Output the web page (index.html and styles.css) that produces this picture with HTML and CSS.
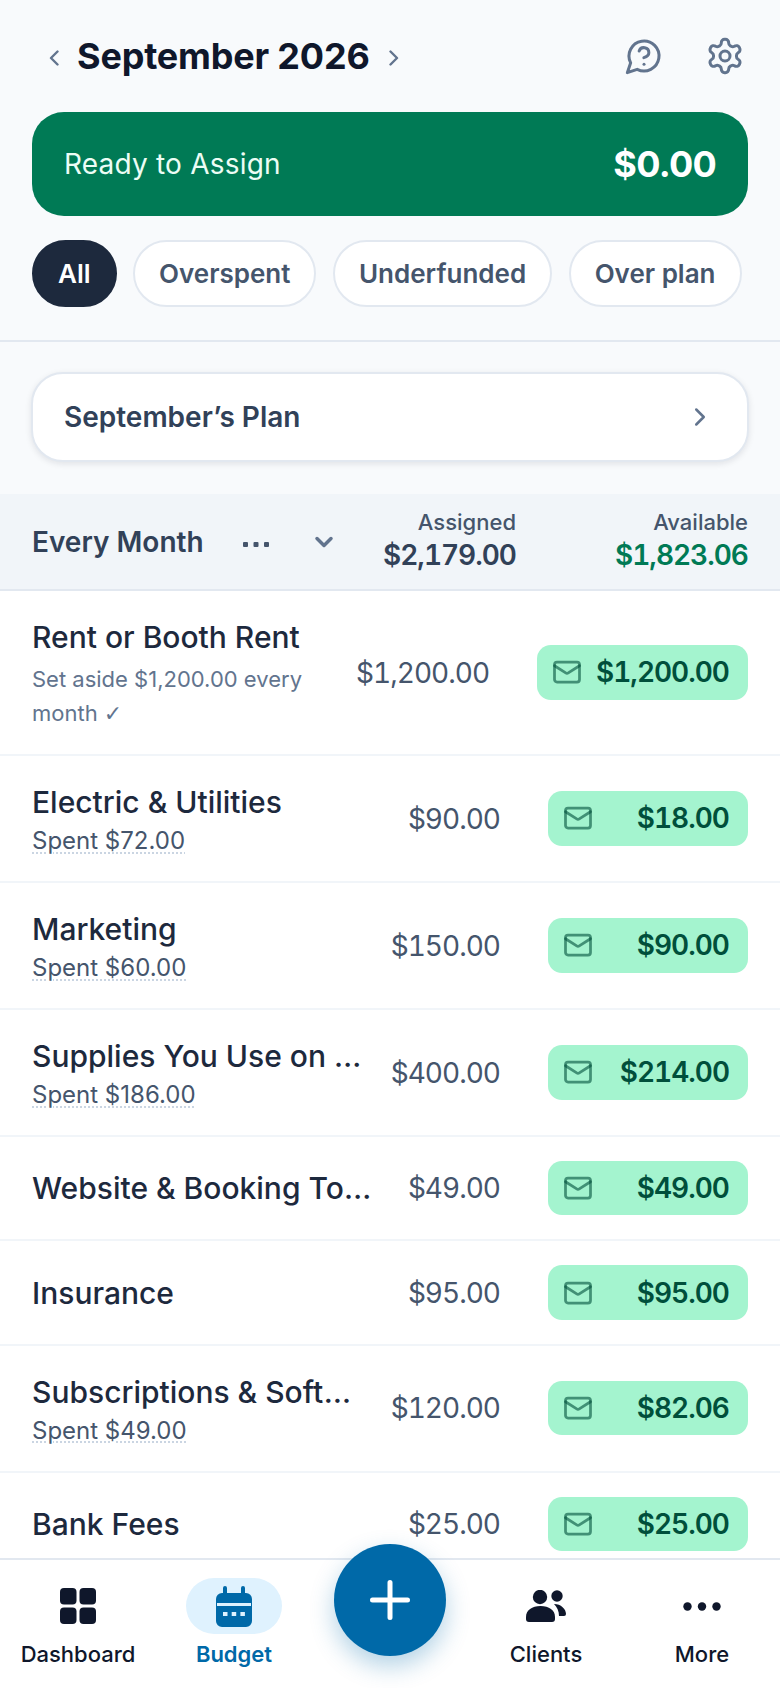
FILE: index.html
```html
<!DOCTYPE html>
<html lang="en">
<head>
  <meta charset="UTF-8">
  <title>Budget</title>
  <link rel="stylesheet" href="styles.css">
</head>
<body>
  <div class="app">
    <div class="top">
      <div class="month-bar">
        <svg class="month-arrow" viewBox="0 0 10 16"><path d="M8.5 1.5 2 8l6.5 6.5"/></svg>
        <h1 class="month-title">September 2026</h1>
        <svg class="month-arrow" viewBox="0 0 10 16"><path d="M1.5 1.5 8 8l-6.5 6.5"/></svg>
        <div class="top-icons">
          <svg class="top-icon" viewBox="0 0 24 24"><path d="M7.9 20A9 9 0 1 0 4 16.1L2 22Z"/><path d="M9.09 9a3 3 0 0 1 5.83 1c0 2-3 3-3 3"/><path d="M12 17h.01"/></svg>
          <svg class="top-icon" viewBox="0 0 24 24"><path d="M12.22 2h-.44a2 2 0 0 0-2 2v.18a2 2 0 0 1-1 1.73l-.43.25a2 2 0 0 1-2 0l-.15-.08a2 2 0 0 0-2.73.73l-.22.38a2 2 0 0 0 .73 2.73l.15.1a2 2 0 0 1 1 1.72v.51a2 2 0 0 1-1 1.74l-.15.09a2 2 0 0 0-.73 2.73l.22.38a2 2 0 0 0 2.73.73l.15-.08a2 2 0 0 1 2 0l.43.25a2 2 0 0 1 1 1.73V20a2 2 0 0 0 2 2h.44a2 2 0 0 0 2-2v-.18a2 2 0 0 1 1-1.73l.43-.25a2 2 0 0 1 2 0l.15.08a2 2 0 0 0 2.73-.73l.22-.39a2 2 0 0 0-.73-2.73l-.15-.08a2 2 0 0 1-1-1.74v-.5a2 2 0 0 1 1-1.74l.15-.09a2 2 0 0 0 .73-2.73l-.22-.38a2 2 0 0 0-2.73-.73l-.15.08a2 2 0 0 1-2 0l-.43-.25a2 2 0 0 1-1-1.73V4a2 2 0 0 0-2-2z"/><circle cx="12" cy="12" r="3"/></svg>
        </div>
      </div>
      <div class="ready-card">
        <span class="ready-label">Ready to Assign</span>
        <span class="ready-amount">$0.00</span>
      </div>
      <div class="filters">
        <span class="filter filter-on">All</span>
        <span class="filter">Overspent</span>
        <span class="filter">Underfunded</span>
        <span class="filter">Over plan</span>
      </div>
    </div>

    <div class="plan-wrap">
      <div class="plan-card">
        <span>September’s Plan</span>
        <svg class="plan-chevron" viewBox="0 0 24 24"><path d="m9 18 6-6-6-6"/></svg>
      </div>
    </div>

    <div class="group-head">
      <div class="group-name">
        <span>Every Month</span>
        <svg class="group-dots" viewBox="0 0 26 5"><rect width="5" height="5" rx="1"/><rect x="10.5" width="5" height="5" rx="1"/><rect x="21" width="5" height="5" rx="1"/></svg>
        <svg class="group-chevron" viewBox="0 0 24 24"><path d="m6 9 6 6 6-6"/></svg>
      </div>
      <div class="group-col">
        <span class="col-label">Assigned</span>
        <span class="col-value">$2,179.00</span>
      </div>
      <div class="group-col group-col-avail">
        <span class="col-label">Available</span>
        <span class="col-value col-green">$1,823.06</span>
      </div>
    </div>

    <div class="rows">
      <div class="row">
        <div class="row-text">
          <div class="row-name">Rent or Booth Rent</div>
          <div class="row-note">Set aside $1,200.00 every month <span class="tick">✓</span></div>
        </div>
        <div class="row-assigned">$1,200.00</div>
        <div class="pill"><svg class="mail" viewBox="0 0 24 24"><rect x="2" y="4" width="20" height="16" rx="2"/><path d="m22 7-8.97 5.7a1.94 1.94 0 0 1-2.06 0L2 7"/></svg><span>$1,200.00</span></div>
      </div>
      <div class="row">
        <div class="row-text">
          <div class="row-name">Electric &amp; Utilities</div>
          <div class="row-spent"><span>Spent $72.00</span></div>
        </div>
        <div class="row-assigned">$90.00</div>
        <div class="pill"><svg class="mail" viewBox="0 0 24 24"><rect x="2" y="4" width="20" height="16" rx="2"/><path d="m22 7-8.97 5.7a1.94 1.94 0 0 1-2.06 0L2 7"/></svg><span>$18.00</span></div>
      </div>
      <div class="row">
        <div class="row-text">
          <div class="row-name">Marketing</div>
          <div class="row-spent"><span>Spent $60.00</span></div>
        </div>
        <div class="row-assigned">$150.00</div>
        <div class="pill"><svg class="mail" viewBox="0 0 24 24"><rect x="2" y="4" width="20" height="16" rx="2"/><path d="m22 7-8.97 5.7a1.94 1.94 0 0 1-2.06 0L2 7"/></svg><span>$90.00</span></div>
      </div>
      <div class="row">
        <div class="row-text">
          <div class="row-name">Supplies You Use on Clients</div>
          <div class="row-spent"><span>Spent $186.00</span></div>
        </div>
        <div class="row-assigned">$400.00</div>
        <div class="pill"><svg class="mail" viewBox="0 0 24 24"><rect x="2" y="4" width="20" height="16" rx="2"/><path d="m22 7-8.97 5.7a1.94 1.94 0 0 1-2.06 0L2 7"/></svg><span>$214.00</span></div>
      </div>
      <div class="row">
        <div class="row-text">
          <div class="row-name">Website &amp; Booking Tools</div>
        </div>
        <div class="row-assigned">$49.00</div>
        <div class="pill"><svg class="mail" viewBox="0 0 24 24"><rect x="2" y="4" width="20" height="16" rx="2"/><path d="m22 7-8.97 5.7a1.94 1.94 0 0 1-2.06 0L2 7"/></svg><span>$49.00</span></div>
      </div>
      <div class="row">
        <div class="row-text">
          <div class="row-name">Insurance</div>
        </div>
        <div class="row-assigned">$95.00</div>
        <div class="pill"><svg class="mail" viewBox="0 0 24 24"><rect x="2" y="4" width="20" height="16" rx="2"/><path d="m22 7-8.97 5.7a1.94 1.94 0 0 1-2.06 0L2 7"/></svg><span>$95.00</span></div>
      </div>
      <div class="row">
        <div class="row-text">
          <div class="row-name">Subscriptions &amp; Software</div>
          <div class="row-spent"><span>Spent $49.00</span></div>
        </div>
        <div class="row-assigned">$120.00</div>
        <div class="pill"><svg class="mail" viewBox="0 0 24 24"><rect x="2" y="4" width="20" height="16" rx="2"/><path d="m22 7-8.97 5.7a1.94 1.94 0 0 1-2.06 0L2 7"/></svg><span>$82.06</span></div>
      </div>
      <div class="row">
        <div class="row-text">
          <div class="row-name">Bank Fees</div>
        </div>
        <div class="row-assigned">$25.00</div>
        <div class="pill"><svg class="mail" viewBox="0 0 24 24"><rect x="2" y="4" width="20" height="16" rx="2"/><path d="m22 7-8.97 5.7a1.94 1.94 0 0 1-2.06 0L2 7"/></svg><span>$25.00</span></div>
      </div>
    </div>

    <nav class="nav">
      <div class="nav-item">
        <div class="nav-icon">
          <svg viewBox="0 0 36 36" class="nav-svg"><rect width="16.5" height="16.5" rx="4"/><rect x="19.5" width="16.5" height="16.5" rx="4"/><rect y="19.5" width="16.5" height="16.5" rx="4"/><rect x="19.5" y="19.5" width="16.5" height="16.5" rx="4"/></svg>
        </div>
        <span>Dashboard</span>
      </div>
      <div class="nav-item nav-active">
        <div class="nav-icon">
          <svg viewBox="0 0 36 41" class="nav-svg cal"><path d="M9 0a2 2 0 0 1 2 2v5h14V2a2 2 0 0 1 4 0v5h1a6 6 0 0 1 6 6v22a6 6 0 0 1-6 6H6a6 6 0 0 1-6-6V13a6 6 0 0 1 6-6h1V2a2 2 0 0 1 2-2z"/><rect class="cal-cut" x="1" y="17" width="34" height="3"/><rect class="cal-cut" x="7" y="26" width="4.5" height="4"/><rect class="cal-cut" x="15.7" y="26" width="4.5" height="4"/><rect class="cal-cut" x="24.4" y="26" width="4.5" height="4"/></svg>
        </div>
        <span>Budget</span>
      </div>
      <div class="nav-gap"></div>
      <div class="nav-item">
        <div class="nav-icon">
          <svg viewBox="0 0 40 32" class="nav-svg users"><circle cx="14" cy="7" r="7.2"/><path d="M0 27C0 20 6 16 14.5 16S29 20 29 27v2a3 3 0 0 1-3 3H3a3 3 0 0 1-3-3z"/><circle cx="31" cy="6" r="5.7"/><path d="M28 14c7 0 12 5 12 10a2 2 0 0 1-2 2h-5c0-5-2-9-5-12z"/></svg>
        </div>
        <span>Clients</span>
      </div>
      <div class="nav-item">
        <div class="nav-icon">
          <svg viewBox="0 0 38 9" class="nav-svg dots"><circle cx="4.5" cy="4.5" r="4.2"/><circle cx="19" cy="4.5" r="4.2"/><circle cx="33.5" cy="4.5" r="4.2"/></svg>
        </div>
        <span>More</span>
      </div>
      <div class="fab">
        <svg viewBox="0 0 40 40" class="fab-plus"><path d="M20 2.5v35M2.5 20h35"/></svg>
      </div>
    </nav>
  </div>
</body>
</html>
```

FILE: styles.css
```css
* {
  box-sizing: border-box;
}
html, body {
  margin: 0;
  padding: 0;
}
body {
  font-family: Inter, "Liberation Sans", sans-serif;
  background: #fff;
  color: #0f172b;
}
.app {
  position: relative;
  width: 780px;
  height: 1688px;
  overflow: hidden;
  background: #f8fafc;
}

/* top area */
.top {
  padding: 0 32px 33px;
  border-bottom: 2px solid #e2e8f0;
}
.month-bar {
  display: flex;
  align-items: center;
  height: 112px;
  padding-left: 17px;
}
.month-title {
  margin: 0 19px 0 18px;
  font-size: 36px;
  font-weight: 700;
  letter-spacing: -0.005em;
  color: #0f172b;
}
.month-arrow {
  flex: none;
  width: 10px;
  height: 16px;
  margin-top: 3px;
  fill: none;
  stroke: #62748e;
  stroke-width: 2.4;
  stroke-linecap: round;
  stroke-linejoin: round;
}
.top-icons {
  margin-left: auto;
  display: flex;
  gap: 41px;
  padding-right: 3px;
}
.top-icon {
  width: 40px;
  height: 40px;
  fill: none;
  stroke: #62748e;
  stroke-width: 1.8;
  stroke-linecap: round;
  stroke-linejoin: round;
}
.ready-card {
  display: flex;
  justify-content: space-between;
  align-items: center;
  height: 104px;
  padding: 0 32px;
  border-radius: 32px;
  background: #007a55;
  color: #fff;
}
.ready-label {
  font-size: 28px;
  letter-spacing: 0.2px;
  color: #ecfdf5;
}
.ready-amount {
  font-size: 36px;
  font-weight: 700;
  letter-spacing: -0.02em;
}
.filters {
  display: flex;
  gap: 16.5px;
  margin-top: 24px;
}
.filter {
  display: flex;
  align-items: center;
  height: 67px;
  padding: 0 24px;
  border: 2px solid #e2e8f0;
  border-radius: 34px;
  background: #fff;
  font-size: 26px;
  font-weight: 600;
  color: #45556c;
}
.filter-on {
  background: #1d293d;
  border-color: #1d293d;
  color: #fff;
}

/* plan */
.plan-wrap {
  padding: 30px 31px 32px;
}
.plan-card {
  display: flex;
  justify-content: space-between;
  align-items: center;
  height: 90px;
  padding: 0 32px 0 31px;
  border: 2px solid #e2e8f0;
  border-radius: 32px;
  background: #fff;
  box-shadow: 0 2px 6px rgba(15, 23, 43, 0.1);
  font-size: 28px;
  font-weight: 600;
  color: #314158;
}
.plan-chevron {
  width: 30px;
  height: 30px;
  fill: none;
  stroke: #62748e;
  stroke-width: 2;
  stroke-linecap: round;
  stroke-linejoin: round;
}

/* group header */
.group-head {
  display: flex;
  align-items: center;
  height: 97px;
  padding: 0 32px;
  background: #f1f5f9;
  border-bottom: 2px solid #e2e8f0;
}
.group-name {
  display: flex;
  align-items: center;
  flex: 1;
  font-size: 28px;
  font-weight: 600;
  color: #314158;
}
.group-dots {
  width: 26px;
  height: 5px;
  margin: 6px 0 0 39px;
  fill: #45556c;
}
.group-chevron {
  width: 28px;
  height: 28px;
  margin-left: 41px;
  fill: none;
  stroke: #62748e;
  stroke-width: 3;
  stroke-linecap: round;
  stroke-linejoin: round;
}
.group-col {
  display: flex;
  flex-direction: column;
  align-items: flex-end;
  padding-bottom: 5px;
}
.group-col-avail {
  width: 232px;
}
.col-label {
  font-size: 22px;
  font-weight: 500;
  line-height: 32px;
  color: #45556c;
}
.col-value {
  font-size: 28px;
  font-weight: 600;
  line-height: 34px;
  font-variant-numeric: tabular-nums;
  letter-spacing: -1px;
  color: #314158;
}
.col-green {
  color: #007a55;
}

/* rows */
.rows {
  background: #fff;
}
.row {
  display: flex;
  align-items: center;
  padding: 24px 32px;
  border-bottom: 2px solid #f1f5f9;
}
.row-text {
  flex: 1;
  min-width: 0;
  padding-right: 27px;
}
.row-name {
  overflow: hidden;
  white-space: nowrap;
  text-overflow: ellipsis;
  font-size: 30px;
  font-weight: 500;
  line-height: 44px;
  color: #1d293d;
}
.row-note {
  margin-top: 4px;
  font-size: 22px;
  line-height: 33.5px;
  color: #62748e;
}
.tick {
  font-family: "DejaVu Sans", sans-serif;
}
.row-spent {
  font-size: 24px;
  line-height: 33px;
  color: #45556c;
}
.row-spent span {
  text-decoration: underline dotted #cad5e2 2px;
  text-underline-offset: 3px;
}
.row-assigned {
  flex: none;
  font-size: 28px;
  font-variant-numeric: tabular-nums;
  letter-spacing: -1px;
  color: #45556c;
}
.pill {
  flex: none;
  display: flex;
  align-items: center;
  justify-content: space-between;
  min-width: 200px;
  height: 54.4px;
  margin-left: 48px;
  padding: 0 19px 0 15px;
  border-radius: 14px;
  background: #a4f4cf;
  font-size: 28px;
  font-weight: 600;
  font-variant-numeric: tabular-nums;
  letter-spacing: -1px;
  color: #004f3b;
}
.pill span {
  margin-left: 14px;
}
.mail {
  width: 30px;
  height: 30px;
  fill: none;
  stroke: #004f3b;
  stroke-opacity: 0.6;
  stroke-width: 2.2;
  stroke-linecap: round;
  stroke-linejoin: round;
}

/* bottom nav, sits over the list */
.nav {
  position: absolute;
  left: 0;
  right: 0;
  bottom: 0;
  display: flex;
  height: 130px;
  background: #fff;
  border-top: 2px solid #e2e8f0;
  font-size: 22px;
  font-weight: 500;
  color: #0f172b;
}
.nav-item {
  flex: 1;
  display: flex;
  flex-direction: column;
  align-items: center;
  padding-top: 18px;
}
.nav-gap {
  flex: none;
  width: 156px;
}
.nav-icon {
  display: flex;
  align-items: center;
  justify-content: center;
  width: 96px;
  height: 56px;
  margin-bottom: 7px;
  border-radius: 28px;
}
.nav-svg {
  width: 36px;
  height: 36px;
  fill: #0f172b;
}
.nav-active {
  color: #0069a8;
  font-weight: 600;
}
.nav-active .nav-icon {
  background: #dff2fe;
}
.cal {
  height: 41px;
  fill: #0069a8;
}
.cal-cut {
  fill: #dff2fe;
}
.users {
  width: 40px;
  height: 32px;
}
.dots {
  width: 38px;
  height: 9px;
}
.fab {
  position: absolute;
  left: 334px;
  top: -16px;
  display: flex;
  align-items: center;
  justify-content: center;
  width: 112px;
  height: 112px;
  border-radius: 50%;
  background: #0069a8;
  box-shadow: 0 10px 25px rgba(0, 105, 168, 0.3);
}
.fab-plus {
  width: 40px;
  height: 40px;
  fill: none;
  stroke: #fff;
  stroke-width: 5;
  stroke-linecap: round;
}
```
